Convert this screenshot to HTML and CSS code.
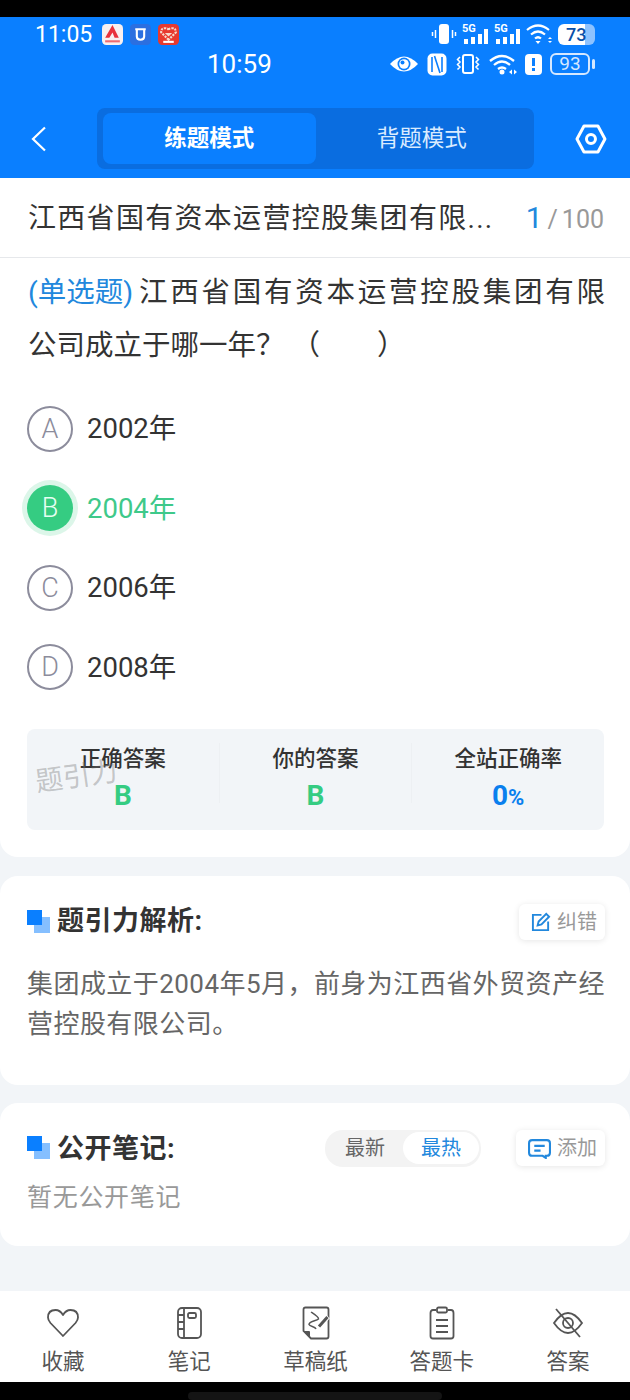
FILE: index.html
```html
<!DOCTYPE html>
<html lang="zh-CN">
<head>
    <meta charset="UTF-8">
    <title>题引力</title>
    <link rel="stylesheet" href="styles.css">
</head>
<body>
<div class="top-black"></div>
<div class="header">
    <div class="status-row">
        <div class="status-left">
            <span class="status-time">11:05</span>
            <svg class="app-icon" viewBox="0 0 20 20"><rect width="20" height="20" rx="4" fill="#f8f0f0"/><path d="M3 13 10 1l6 12h-4l-2-5-3 5z" fill="#e8323c"/><rect x="3" y="15.500" width="14" height="2" fill="#ee6a70"/></svg>
            <svg class="app-icon" viewBox="0 0 20 20"><rect width="20" height="20" rx="4" fill="#2b6fe0"/><path d="M5 5h10M6.500 6v6q0 3 3.500 3t3.500-3V6" fill="none" stroke="#fff" stroke-width="2"/></svg>
            <svg class="app-icon" viewBox="0 0 20 20"><rect width="20" height="20" rx="4" fill="#e8392f"/><path d="M10 15 3 8q0-4 3.500-4T10 6q0-2 3.500-2T17 8z" fill="none" stroke="#f6d9cc" stroke-width="2" stroke-dasharray="2 1"/><path d="M10 12 6.500 8.500h7z" fill="#f6d9cc"/><rect x="5" y="16" width="10" height="2" fill="#fff"/></svg>
        </div>
        <div class="status-right">
            <svg class="sys-icon" width="26" height="22" viewBox="0 0 26 22"><rect x="8" y="1" width="10" height="20" rx="3" fill="#fff"/><path d="M4.500 7v8M1.500 9v4M21.500 7v8M24.500 9v4" stroke="#fff" stroke-width="1.500"/></svg>
            <svg class="sys-icon" width="27" height="22" viewBox="0 0 27 22"><rect x="2" y="16" width="4" height="5" fill="#fff"/><rect x="9" y="14" width="4" height="7" fill="#fff"/><rect x="16" y="11" width="4" height="10" fill="#fff"/><rect x="22" y="6" width="4" height="15" fill="#fff"/><text x="0" y="9" class="five-g">5G</text></svg>
            <svg class="sys-icon" width="27" height="22" viewBox="0 0 27 22"><rect x="2" y="16" width="4" height="5" fill="#fff"/><rect x="9" y="14" width="4" height="7" fill="#fff"/><rect x="16" y="11" width="4" height="10" fill="#fff"/><rect x="22" y="6" width="4" height="15" fill="#fff"/><text x="0" y="9" class="five-g">5G</text></svg>
            <svg class="sys-icon" width="27" height="22" viewBox="0 0 27 22"><path d="M1 7q11-9 22 0M5 11.500q7-6 14 0M9 15.500q3-2.500 6 0" fill="none" stroke="#fff" stroke-width="2.200"/><path d="M9.500 18h5L12 21zM22 16l2-2 2 2zM22 18l2 2 2-2z" fill="#fff"/></svg>
            <div class="batt-top"><span>73</span></div>
        </div>
    </div>
    <div class="status-row second">
        <span class="status-time big">10:59</span>
        <div class="status-right wide">
            <svg class="sys-icon" width="30" height="20" viewBox="0 0 30 20"><path d="M1 10q14-15 28 0-14 15-28 0z" fill="#fff"/><circle cx="15" cy="10" r="6.500" fill="#0a7fff"/><circle cx="15" cy="10" r="4.800" fill="#fff"/><circle cx="13.500" cy="8.500" r="2" fill="#0a7fff"/></svg>
            <svg class="sys-icon" width="20" height="23" viewBox="0 0 20 23"><rect x="0.500" y="0.500" width="19" height="22" rx="5" fill="#fff"/><path d="M5 4v15M15 4v15" stroke="#0a7fff" stroke-width="1.600"/><path d="M7.500 3 13 20" stroke="#0a7fff" stroke-width="1.600"/></svg>
            <svg class="sys-icon" width="26" height="22" viewBox="0 0 26 22"><rect x="8" y="2" width="10" height="18" rx="2" fill="none" stroke="#fff" stroke-width="2"/><path d="M5 4 2.500 6.500 5 9 2.500 11.500 5 14 2.500 16.500M21 4l2.500 2.500L21 9l2.500 2.500L21 14l2.500 2.500" fill="none" stroke="#fff" stroke-width="1.500"/></svg>
            <svg class="sys-icon" width="28" height="22" viewBox="0 0 28 22"><path d="M1 8q12-10 24 0M5 12q8-7 16 0M9 16q4-3 8 0" fill="none" stroke="#fff" stroke-width="2.300"/><circle cx="13" cy="19" r="2.500" fill="#fff"/><path d="M20 19l3-2.500V21.500zM28 19l-3-2.500V21.500z" fill="#fff"/></svg>
            <svg class="sys-icon" width="17" height="21" viewBox="0 0 17 21"><path d="M4 0h9q4 0 4 4v13q0 4-4 4H4q-4 0-4-4V4q0-4 4-4z" fill="#fff"/><rect x="7" y="4" width="3" height="8" fill="#0a7fff"/><rect x="7" y="14" width="3" height="3" fill="#0a7fff"/></svg>
            <div class="batt-bottom"><span>93</span></div>
        </div>
    </div>
    <div class="nav-row">
        <svg class="back-icon" width="16" height="26" viewBox="0 0 16 26"><path d="M14 1.500 2 13l12 11.500" fill="none" stroke="#fff" stroke-width="2.200"/></svg>
        <div class="segment">
            <div class="segment-item active">练题模式</div>
            <div class="segment-item">背题模式</div>
        </div>
        <svg class="gear-icon" width="32" height="30" viewBox="0 0 32 30"><path d="M9 2h14l7 13-7 13H9L2 15z" fill="none" stroke="#fff" stroke-width="3" stroke-linejoin="round"/><circle cx="16" cy="15" r="4.500" fill="none" stroke="#fff" stroke-width="3"/></svg>
    </div>
</div>

<div class="main">
    <div class="card question-card">
        <div class="title-row">
            <span class="title-text">江西省国有资本运营控股集团有限...</span>
            <span class="counter"><b>1</b><i>/</i>100</span>
        </div>
        <div class="question">
            <div class="q-line"><span class="q-type">(单选题)</span>江西省国有资本运营控股集团有限</div>
            <div>公司成立于哪一年？<span class="blank">（　　）</span></div>
        </div>
        <div class="options">
            <div class="option"><span class="letter">A</span><span class="option-text">2002年</span></div>
            <div class="option right"><span class="letter">B</span><span class="option-text">2004年</span></div>
            <div class="option"><span class="letter">C</span><span class="option-text">2006年</span></div>
            <div class="option"><span class="letter">D</span><span class="option-text">2008年</span></div>
        </div>
        <div class="stats">
            <div class="stat"><div class="stat-label">正确答案</div><div class="stat-value green">B</div></div>
            <div class="stat"><div class="stat-label">你的答案</div><div class="stat-value green">B</div></div>
            <div class="stat"><div class="stat-label">全站正确率</div><div class="stat-value blue">0<small>%</small></div></div>
            <div class="watermark">题引力</div>
        </div>
    </div>

    <div class="card analysis-card">
        <div class="section-head">
            <span class="mark"></span>
            <span class="section-title">题引力解析:</span>
            <div class="chip">
                <svg width="20" height="20" viewBox="0 0 21 21"><path d="M11 3H2v16h16v-9" fill="none" stroke="#2288dd" stroke-width="2"/><path d="M7 14l1-4 8-8 3 3-8 8z" fill="none" stroke="#2288dd" stroke-width="2"/></svg>
                <span>纠错</span>
            </div>
        </div>
        <div class="analysis-text">集团成立于2004年5月，前身为江西省外贸资产经营控股有限公司。</div>
    </div>

    <div class="card notes-card">
        <div class="section-head">
            <span class="mark"></span>
            <span class="section-title">公开笔记:</span>
            <div class="toggle">
                <span>最新</span>
                <span class="on">最热</span>
            </div>
            <div class="chip">
                <svg width="23" height="21" viewBox="0 0 22 20"><path d="M4 2h14q3 0 3 3v9q0 3-3 3h-1v2l-3-2H4q-3 0-3-3V5q0-3 3-3z" fill="none" stroke="#2288dd" stroke-width="2"/><path d="M6 7.500h10M6 12h6" stroke="#2288dd" stroke-width="2"/></svg>
                <span>添加</span>
            </div>
        </div>
        <div class="no-notes">暂无公开笔记</div>
    </div>
</div>

<div class="tabbar">
    <div class="tab">
        <svg width="32" height="30" viewBox="0 0 32 30"><path d="M16 28 3.500 15Q1 12 1 9.500 1 2 8.500 2 13 2 16 7q3-5 7.500-5Q31 2 31 9.500 31 12 28.500 15z" fill="none" stroke="#555" stroke-width="1.800" stroke-linejoin="round"/></svg>
        <span>收藏</span>
    </div>
    <div class="tab">
        <svg width="26" height="34" viewBox="0 0 26 34"><rect x="2" y="2" width="23" height="30" rx="4" fill="none" stroke="#555" stroke-width="1.800"/><path d="M8 2v30M2 9h6M2 16h6M2 23h6" fill="none" stroke="#555" stroke-width="1.800"/><rect x="12" y="7" width="8" height="5" rx="1.500" fill="none" stroke="#555" stroke-width="1.800"/></svg>
        <span>笔记</span>
    </div>
    <div class="tab">
        <svg width="28" height="34" viewBox="0 0 28 34"><path d="M1.500 25V3.500q0-2 2-2h21q2 0 2 2v27q0 2-2 2H9z" fill="none" stroke="#555" stroke-width="1.800"/><path d="M1.500 25H7q1 0 1 1v6z" fill="#555"/><path d="M9 6C12 8 17 11 16.500 13 14 15 7 15 7 18.500 8 21 13 20 14 23" fill="none" stroke="#555" stroke-width="1.500"/><path d="M17 20.500 26 10.500" stroke="#fff" stroke-width="5"/><path d="M17 20.500 25.500 11" stroke="#555" stroke-width="3"/></svg>
        <span>草稿纸</span>
    </div>
    <div class="tab">
        <svg width="26" height="34" viewBox="0 0 26 34"><path d="M7 4H4Q1.500 4 1.500 7v23q0 2.500 2.500 2.500h18q2.500 0 2.500-2.500V7Q24.500 4 22 4h-3" fill="none" stroke="#555" stroke-width="1.800"/><rect x="8" y="1.500" width="10" height="5" rx="1.500" fill="none" stroke="#555" stroke-width="1.800"/><path d="M7 14h12M7 20h12M7 26h12" stroke="#555" stroke-width="1.800"/></svg>
        <span>答题卡</span>
    </div>
    <div class="tab">
        <svg width="32" height="30" viewBox="0 0 32 30"><path d="M2 15Q9 5 16 5t14 10Q23 25 16 25T2 15z" fill="none" stroke="#555" stroke-width="1.800"/><circle cx="16" cy="15" r="5" fill="none" stroke="#555" stroke-width="1.800"/><path d="M4 1l24 28" stroke="#555" stroke-width="1.800"/></svg>
        <span>答案</span>
    </div>
</div>
<div class="bottom-black"><div class="home-bar"></div></div>
</body>
</html>
```

FILE: styles.css
```css
* {
    box-sizing: border-box;
}
html, body {
    margin: 0;
    padding: 0;
}
body {
    width: 630px;
    height: 1400px;
    display: flex;
    flex-direction: column;
    overflow: hidden;
    background-color: #f2f5f8;
    font-family: Roboto, "Noto Sans CJK SC", sans-serif;
    color: #333;
}
.top-black {
    height: 17px;
    flex: none;
    background-color: #000;
}
.header {
    height: 161px;
    flex: none;
    background-color: #0a7fff;
    color: #fff;
}
.status-row {
    height: 34px;
    display: flex;
    align-items: center;
    justify-content: space-between;
    padding: 0 35px;
}
.status-row.second {
    height: 26px;
    padding: 0 40px 0 207px;
}
.status-left {
    display: flex;
    align-items: center;
}
.status-time {
    font-size: 23px;
    margin-right: 10px;
}
.status-time.big {
    font-size: 26px;
    margin-right: 0;
}
.app-icon {
    width: 21px;
    height: 21px;
    margin-right: 7px;
}
.status-right {
    display: flex;
    align-items: center;
    gap: 5px;
}
.status-right.wide {
    gap: 8px;
}
.five-g {
    font-size: 11px;
    font-weight: 700;
    fill: #fff;
}
.batt-top {
    width: 37px;
    height: 21px;
    border-radius: 6px;
    background: linear-gradient(to right, #fff 73%, #8dc2ff 73%);
    color: #0a4fa8;
    font-size: 18px;
    font-weight: 500;
    line-height: 21px;
    padding-left: 8px;
}
.batt-bottom {
    width: 40px;
    height: 22px;
    border: 2px solid #d5e8ff;
    border-radius: 6px;
    color: #d5e8ff;
    font-size: 19px;
    line-height: 18px;
    text-align: center;
    position: relative;
}
.batt-bottom::after {
    content: "";
    position: absolute;
    right: -7px;
    top: 4px;
    width: 3px;
    height: 10px;
    border-radius: 2px;
    background-color: #d5e8ff;
}
.nav-row {
    margin-top: 31px;
    display: flex;
    align-items: center;
    padding: 0 23px 0 31px;
}
.back-icon {
    margin-right: 50px;
}
.segment {
    width: 438px;
    height: 61px;
    padding: 5px 6px;
    border-radius: 8px;
    background-color: #0a6de0;
    display: flex;
    margin-right: 41px;
}
.segment-item {
    flex: 1;
    border-radius: 8px;
    display: flex;
    align-items: center;
    justify-content: center;
    padding-bottom: 5px;
    font-size: 22.500px;
    color: #d9ebff;
}
.segment-item.active {
    background-color: #0a7fff;
    color: #fff;
    font-weight: 700;
}
.main {
    flex: 1;
    display: flex;
    flex-direction: column;
    gap: 18px;
}
.card {
    background-color: #fff;
    border-radius: 18px;
}
.question-card {
    height: 679px;
    margin-bottom: 1px;
    border-radius: 0 0 18px 18px;
}
.title-row {
    height: 80px;
    display: flex;
    align-items: center;
    justify-content: space-between;
    padding: 0 26px 0 28px;
    border-bottom: 1px solid #e6e8eb;
}
.title-text {
    padding-bottom: 4px;
    font-size: 28px;
    letter-spacing: 1.300px;
    color: #333;
}
.counter {
    font-size: 25px;
    color: #999;
}
.counter b {
    font-size: 30px;
    font-weight: 400;
    color: #2288dd;
    margin-right: 5px;
}
.counter i {
    font-style: normal;
    margin-right: 4px;
}
.question {
    padding: 8px 25px 0 28px;
    font-size: 28.500px;
    line-height: 53px;
    color: #333;
}
.q-line {
    text-align: justify;
    text-align-last: justify;
}
.q-type {
    display: inline-block;
    margin-right: 3px;
    color: #2288dd;
}
.blank {
    margin-left: 7px;
}
.options {
    margin-top: 17px;
    padding: 0 27px;
}
.option {
    height: 79.500px;
    display: flex;
    align-items: center;
    font-size: 27.500px;
    color: #333;
}
.option-text {
    padding-bottom: 5px;
}
.letter {
    width: 46px;
    height: 46px;
    margin-right: 14px;
    border: 2px solid #8c8c9c;
    border-radius: 50%;
    display: flex;
    align-items: center;
    justify-content: center;
    font-size: 27px;
    font-weight: 300;
    color: #8c8c9c;
}
.option.right {
    color: #3ec98a;
}
.option.right .letter {
    border: none;
    background-color: #35cc82;
    box-shadow: 0 0 0 5px #dcf6e9;
    color: #e6fff2;
}
.stats {
    position: relative;
    height: 101px;
    margin: 22px 26px 0 27px;
    border-radius: 8px;
    background-color: #f2f5f8;
    display: flex;
    padding-top: 14px;
}
.stat {
    flex: 1;
    text-align: center;
}
.stat + .stat {
    border-left: 1px solid #edf0f3;
    height: 60px;
}
.stat-label {
    font-size: 21.500px;
    line-height: 32px;
    font-weight: 500;
    color: #333;
}
.stat-value {
    font-size: 28px;
    line-height: 42px;
    font-weight: 700;
}
.stat-value small {
    font-size: 22px;
}
.green {
    color: #35cc82;
}
.blue {
    color: #0a7fee;
}
.watermark {
    position: absolute;
    left: 8px;
    top: 25px;
    font-size: 27.500px;
    color: rgba(120, 120, 120, 0.4);
    transform: rotate(-8deg);
}
.analysis-card {
    height: 209px;
    padding: 28px 25px 0 27px;
}
.notes-card {
    height: 143px;
    padding: 27px 25px 0 27px;
}
.section-head {
    height: 36px;
    display: flex;
    align-items: center;
}
.mark {
    position: relative;
    width: 23px;
    height: 24px;
    margin-right: 7px;
}
.mark::before {
    content: "";
    position: absolute;
    left: 7px;
    top: 7px;
    width: 16px;
    height: 16px;
    background-color: #85bfff;
}
.mark::after {
    content: "";
    position: absolute;
    left: 0;
    top: 0;
    width: 15px;
    height: 15px;
    background-color: #0a7fff;
}
.section-title {
    flex: 1;
    padding-bottom: 8px;
    font-size: 27px;
    letter-spacing: 0.500px;
    font-weight: 700;
    color: #333;
}
.notes-card .section-title {
    padding-bottom: 4px;
}
.chip {
    height: 36px;
    padding: 0 8px 0 12px;
    display: flex;
    align-items: center;
    gap: 6px;
    border-radius: 6px;
    background-color: #fff;
    box-shadow: 0 1px 6px rgba(0, 0, 0, 0.1);
    font-size: 20px;
    color: #999;
}
.chip span {
    padding-bottom: 3px;
}
.toggle {
    display: flex;
    align-items: center;
    height: 37px;
    margin-right: 35px;
    padding: 2px;
    border-radius: 18px;
    background-color: #f3f3f3;
    font-size: 20px;
    color: #666;
}
.toggle span {
    padding: 0 18px;
    line-height: 32px;
    border-radius: 16px;
}
.toggle .on {
    background-color: #fff;
    color: #2288dd;
}
.analysis-text {
    margin: 24px -8px 0 0;
    font-size: 26px;
    line-height: 40px;
    letter-spacing: 0.450px;
    color: #666;
}
.no-notes {
    margin-top: 11px;
    font-size: 25px;
    letter-spacing: 0.700px;
    color: #999;
}
.tabbar {
    height: 91px;
    flex: none;
    background-color: #fff;
    display: flex;
    justify-content: space-between;
    padding: 15px 29px 0 30px;
}
.tab {
    width: 66px;
    display: flex;
    flex-direction: column;
    align-items: center;
    font-size: 21.500px;
    color: #555;
}
.tab svg {
    height: 34px;
}
.tab span {
    white-space: nowrap;
    margin-top: 4px;
}
.bottom-black {
    height: 18px;
    flex: none;
    background-color: #000;
    display: flex;
    justify-content: center;
    padding-top: 10px;
}
.home-bar {
    width: 254px;
    height: 8px;
    border-radius: 4px;
    background-color: #141414;
}
```
